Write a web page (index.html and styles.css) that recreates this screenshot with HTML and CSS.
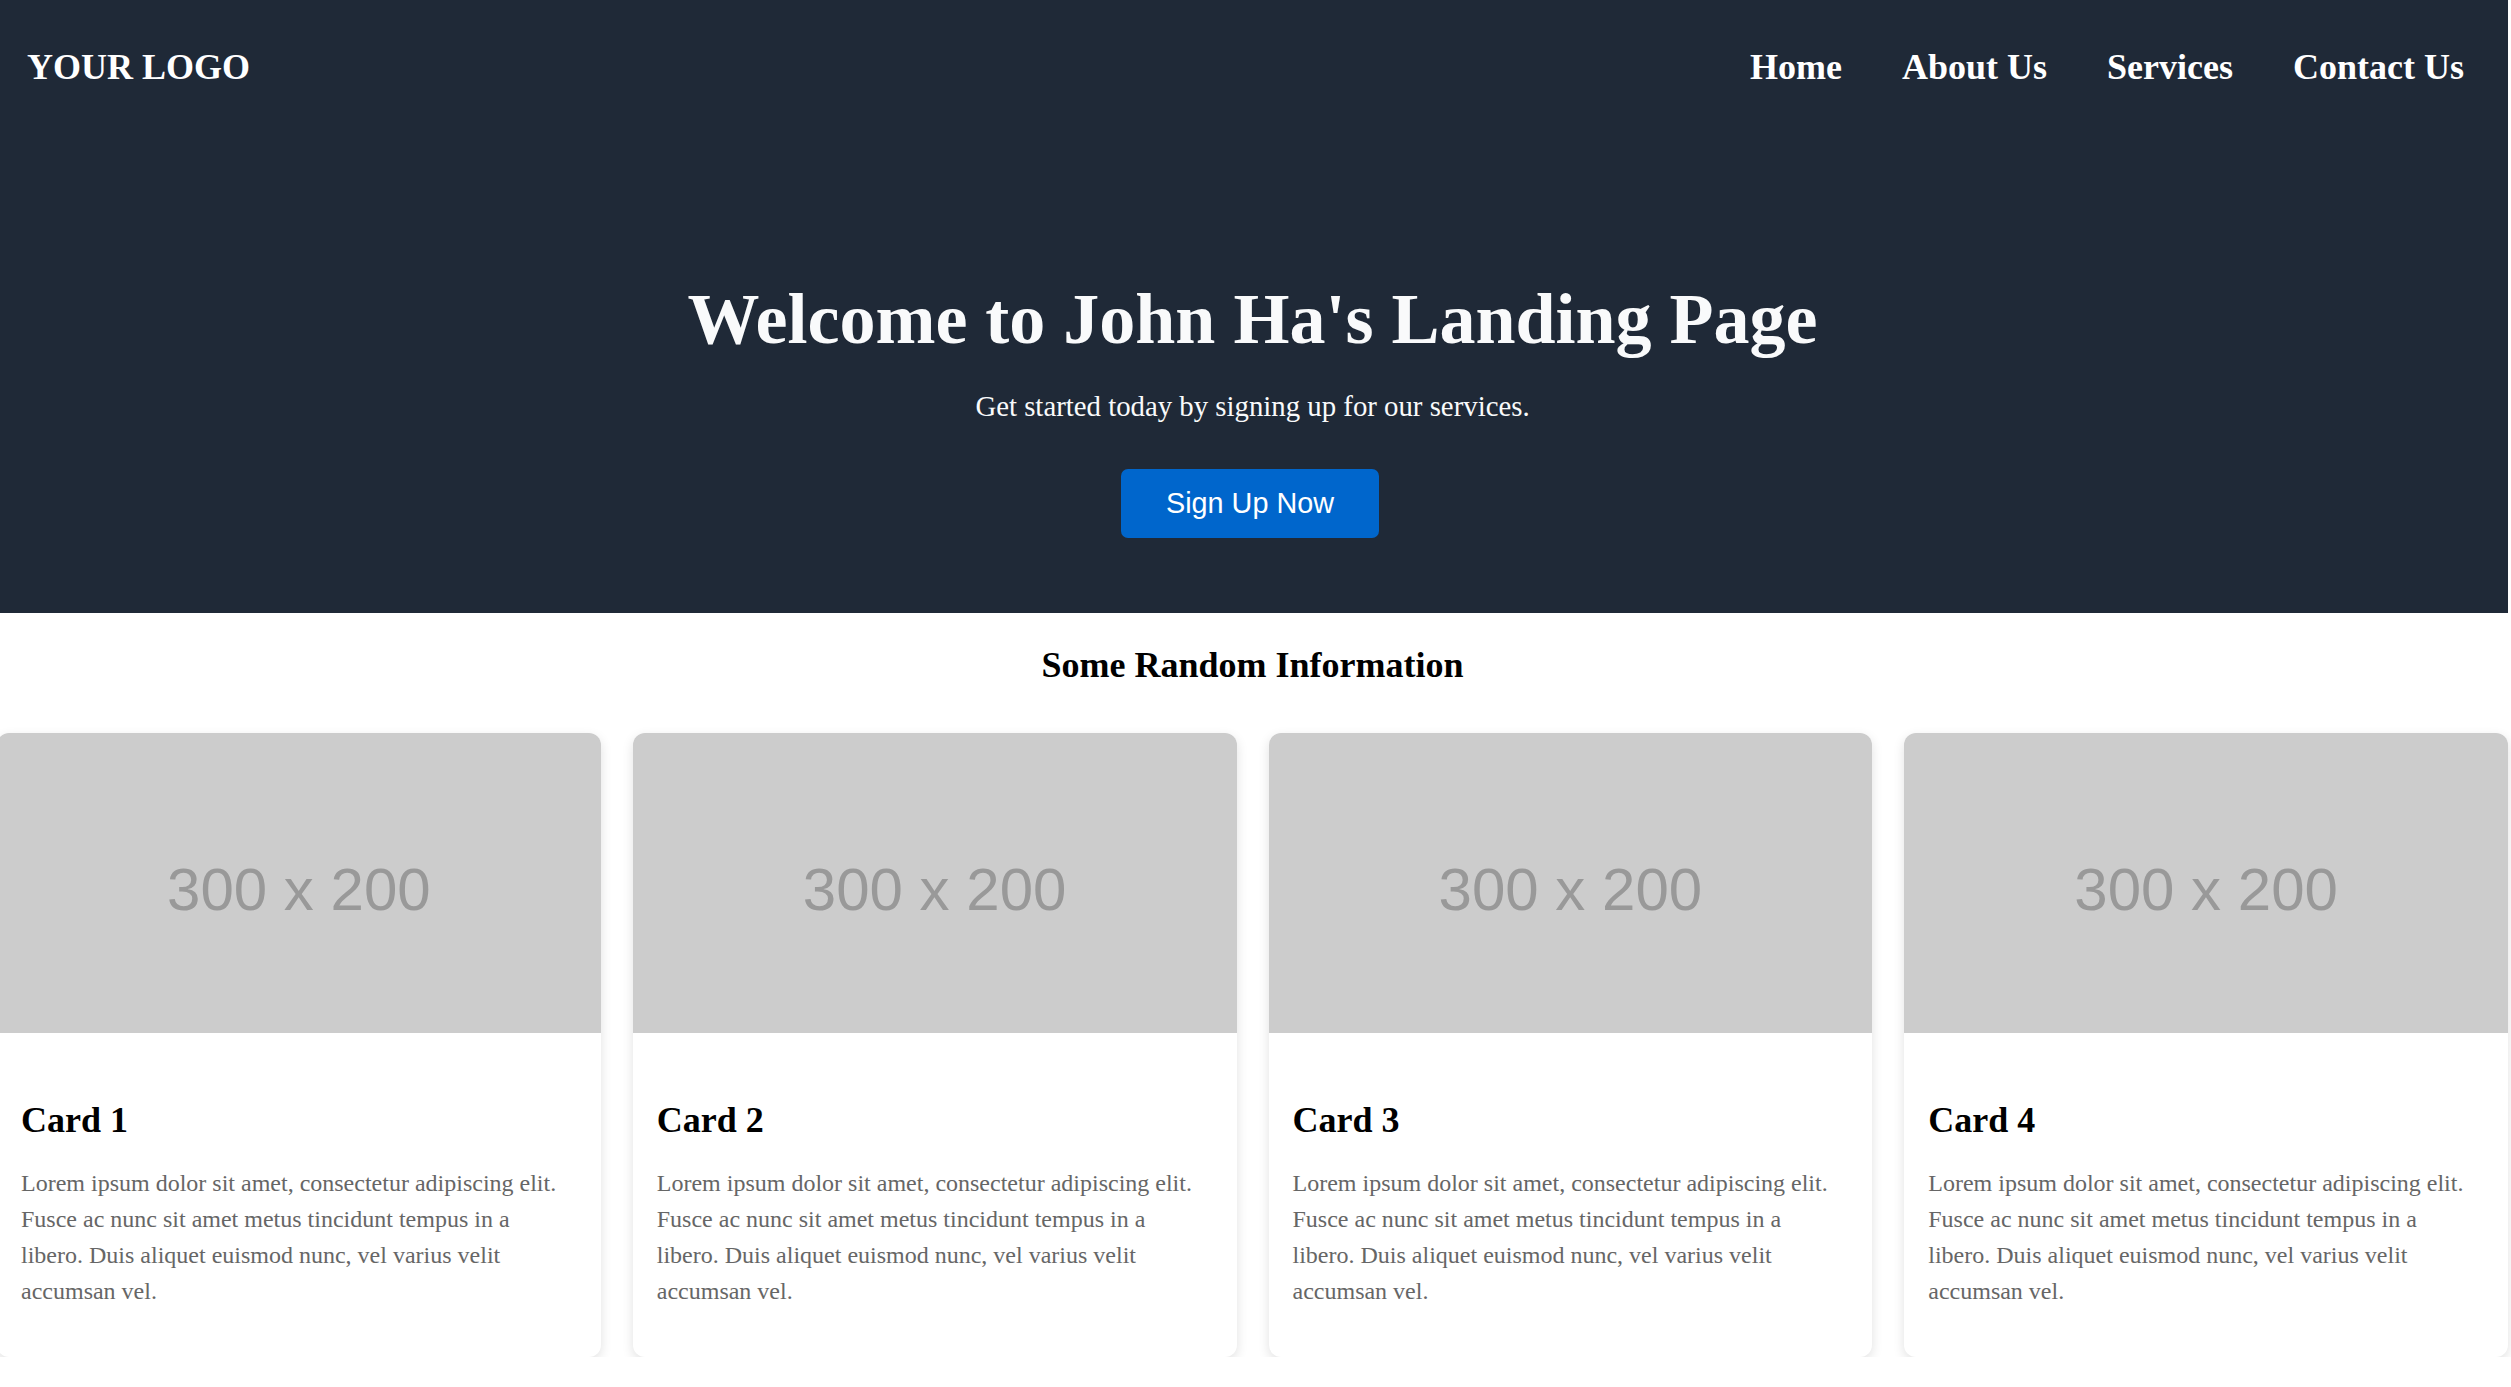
FILE: index.html
```html
<!DOCTYPE html>
<html lang="en">
<head>
<meta charset="utf-8">
<title>John Ha's Landing Page</title>
<link rel="stylesheet" href="styles.css">
</head>
<body>
<div class="page">
  <div class="top">
    <header class="site-header">
      <div class="logo">YOUR LOGO</div>
      <nav class="nav">
        <a href="#">Home</a>
        <a href="#">About Us</a>
        <a href="#">Services</a>
        <a href="#">Contact Us</a>
      </nav>
    </header>
    <section class="hero">
      <h1 class="hero-title">Welcome to John Ha's Landing Page</h1>
      <p class="hero-lead">Get started today by signing up for our services.</p>
      <a class="btn" href="#">Sign Up Now</a>
    </section>
  </div>
  <section class="info">
    <h2 class="info-title">Some Random Information</h2>
    <div class="cards">
      <article class="card">
        <div class="thumb"><span>300 x 200</span></div>
        <div class="card-body">
          <h3 class="card-title">Card 1</h3>
          <p class="card-text">Lorem ipsum dolor sit amet, consectetur adipiscing elit. Fusce ac nunc sit amet metus tincidunt tempus in a libero. Duis aliquet euismod nunc, vel varius velit accumsan vel.</p>
        </div>
      </article>
      <article class="card">
        <div class="thumb"><span>300 x 200</span></div>
        <div class="card-body">
          <h3 class="card-title">Card 2</h3>
          <p class="card-text">Lorem ipsum dolor sit amet, consectetur adipiscing elit. Fusce ac nunc sit amet metus tincidunt tempus in a libero. Duis aliquet euismod nunc, vel varius velit accumsan vel.</p>
        </div>
      </article>
      <article class="card">
        <div class="thumb"><span>300 x 200</span></div>
        <div class="card-body">
          <h3 class="card-title">Card 3</h3>
          <p class="card-text">Lorem ipsum dolor sit amet, consectetur adipiscing elit. Fusce ac nunc sit amet metus tincidunt tempus in a libero. Duis aliquet euismod nunc, vel varius velit accumsan vel.</p>
        </div>
      </article>
      <article class="card">
        <div class="thumb"><span>300 x 200</span></div>
        <div class="card-body">
          <h3 class="card-title">Card 4</h3>
          <p class="card-text">Lorem ipsum dolor sit amet, consectetur adipiscing elit. Fusce ac nunc sit amet metus tincidunt tempus in a libero. Duis aliquet euismod nunc, vel varius velit accumsan vel.</p>
        </div>
      </article>
    </div>
  </section>
</div>
</body>
</html>
```
FILE: styles.css
```css
html {
  overflow: hidden;
}

body {
  margin: 0;
  background: #ffffff;
  color: #000000;
  font-family: "Liberation Serif", "Times New Roman", serif;
  font-size: 24px;
  line-height: 1.5;
}

.page {
  width: 100%;
  margin-left: -3px;
}

.top {
  background: #1f2937;
  color: #ffffff;
  padding-bottom: 75px;
}

.site-header {
  display: flex;
  justify-content: space-between;
  align-items: center;
  padding: 40px 44px 0 30px;
  font-size: 36px;
  line-height: 54px;
  font-weight: bold;
}

.nav {
  display: flex;
  gap: 60px;
}

.nav a {
  color: #ffffff;
  text-decoration: none;
}

.hero {
  display: flex;
  flex-direction: column;
  align-items: center;
  padding-top: 171px;
}

.hero-title {
  margin: 0;
  font-size: 72px;
  line-height: 108px;
  font-weight: bold;
  color: #f9fafb;
}

.hero-lead {
  margin: 12px 0 0;
  font-size: 28.8px;
  line-height: 43.2px;
  color: #f9fafb;
}

.btn {
  display: inline-block;
  margin: 41px 5px 0 0;
  padding: 18px 45px;
  background: #0066cc;
  color: #ffffff;
  border-radius: 7px;
  font-family: "Liberation Sans", Arial, sans-serif;
  font-size: 28.8px;
  line-height: 33px;
  text-decoration: none;
}

.info {
  padding-top: 25px;
}

.info-title {
  margin: 0 0 41px;
  text-align: center;
  font-size: 36px;
  line-height: 54px;
  font-weight: bold;
}

.cards {
  display: grid;
  grid-template-columns: repeat(4, 1fr);
  gap: 32px;
}

.card {
  background: #ffffff;
  border-radius: 12px;
  overflow: hidden;
  box-shadow: 0 4px 12px rgba(0, 0, 0, 0.12);
}

.thumb {
  box-sizing: border-box;
  height: 300px;
  padding-top: 14px;
  display: flex;
  align-items: center;
  justify-content: center;
  background: #cccccc;
  color: #999999;
  font-family: "Liberation Sans", Arial, sans-serif;
  font-size: 60px;
  line-height: 1;
}

.card-body {
  padding: 24px;
}

.card-title {
  margin: 36px 0 18px;
  font-size: 36px;
  line-height: 54px;
  font-weight: bold;
}

.card-text {
  margin: 0 0 24px;
  color: #666666;
  font-size: 24px;
  line-height: 36px;
}
```
